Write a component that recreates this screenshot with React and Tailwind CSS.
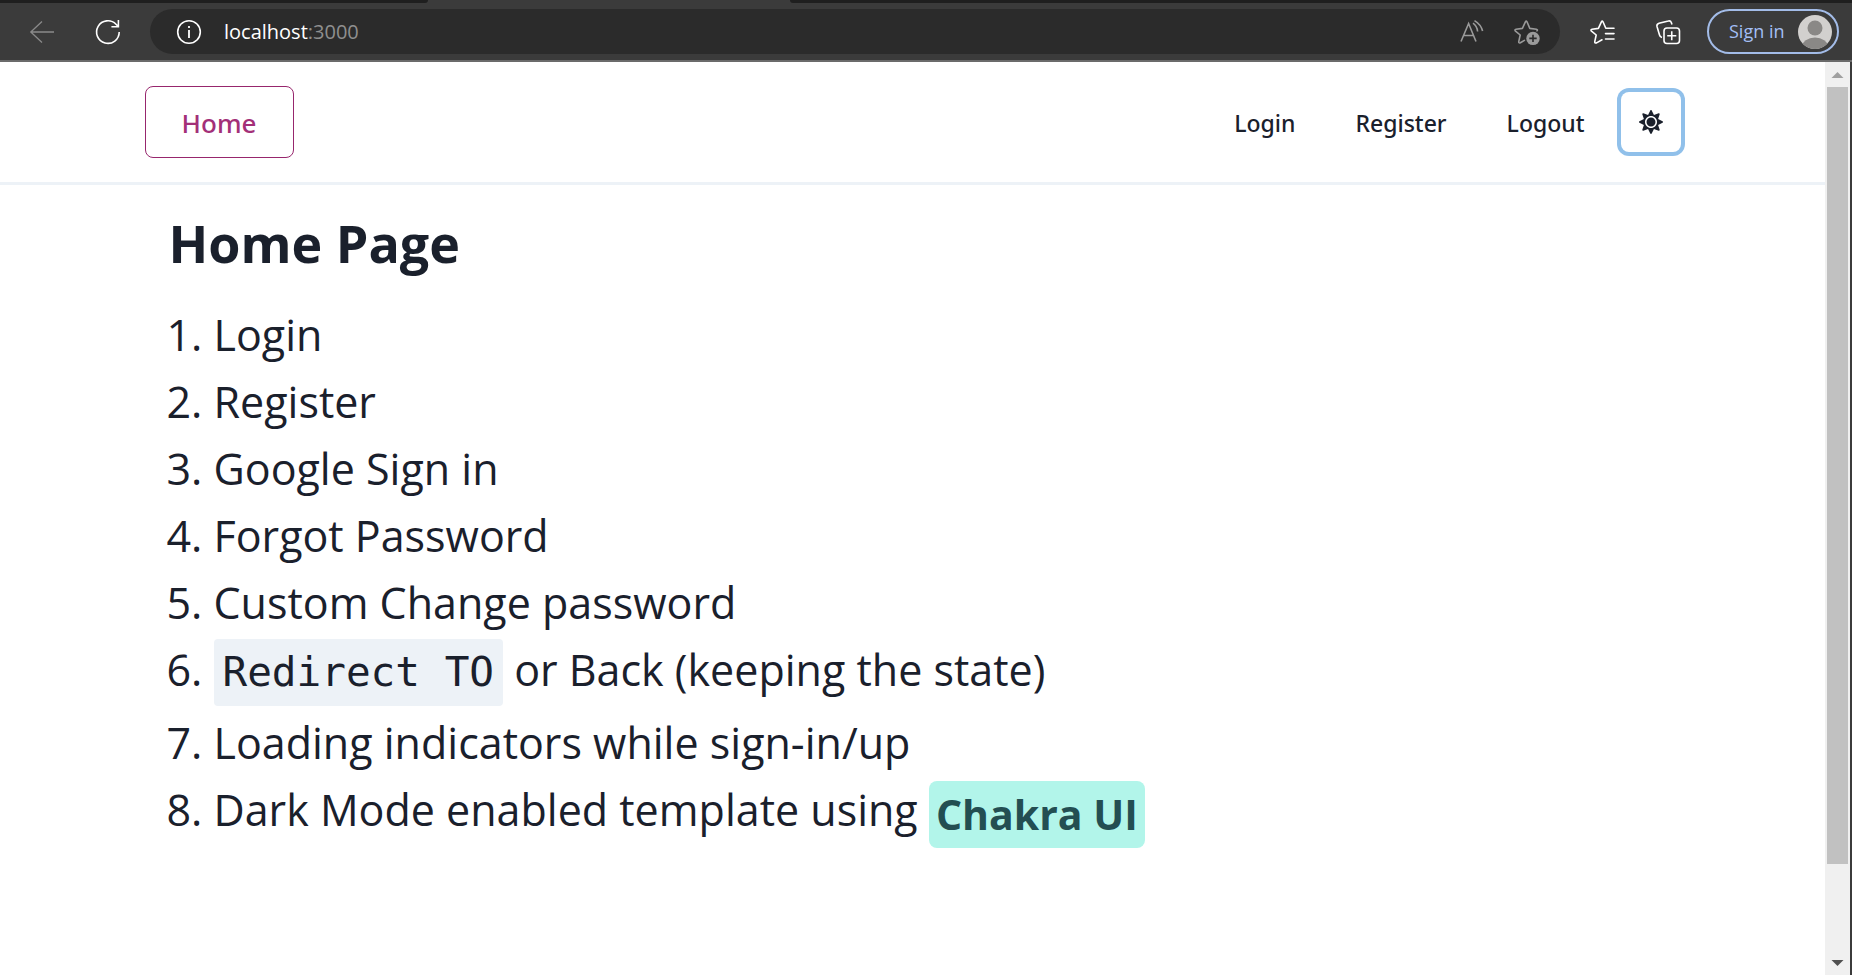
import React from "react";
import { FaSun } from "react-icons/fa";

const features = [
  "Login",
  "Register",
  "Google Sign in",
  "Forgot Password",
  "Custom Change password",
];

function ToolButton({ label, className = "", children }) {
  return (
    <button type="button" aria-label={label} className={"flex size-6 shrink-0 items-center justify-center " + className}>
      {children}
    </button>
  );
}

function Icon({ children, className = "" }) {
  return (
    <svg viewBox="0 0 24 24" fill="none" stroke="currentColor" strokeWidth="1.6" className={"size-6 shrink-0 overflow-visible " + className}>
      {children}
    </svg>
  );
}

function TabStrip() {
  return (
    <div className="flex h-[3px] bg-[#3b3b3b]">
      <div className="w-[428px] rounded-br-[3px] bg-[#1f1f1f]" />
      <div className="w-[362px]" />
      <div className="flex-1 rounded-bl-[3px] bg-[#1f1f1f]" />
    </div>
  );
}

function Toolbar() {
  return (
    <div className="flex h-[59px] items-center border-b-2 border-[#6b6b6b] bg-[#3b3b3b] pr-[13px] pl-[30px] text-white">
      <ToolButton label="Back" className="mr-[42px] text-[#8a8a8a]">
        <Icon>
          <path d="M24 12H.8M12 1.5.8 12 12 22.5" strokeWidth="1.3" />
        </Icon>
      </ToolButton>
      <ToolButton label="Refresh" className="mr-[30px]">
        <Icon>
          <path d="M23.2 12A11.3 11.3 0 1 1 20 4.2L22.4 6.6M22.4 0V6.8H15.4" />
        </Icon>
      </ToolButton>
      <div className="flex h-[45px] min-w-0 flex-1 items-center rounded-full bg-[#2b2b2b] pr-[22px] pl-[27px]">
        <ToolButton label="View site information" className="mr-[23px]">
          <Icon>
            <circle cx="12" cy="12" r="11.3" />
            <path d="M12 10V18M12 6V8" strokeWidth="1.8" />
          </Icon>
        </ToolButton>
        <div role="textbox" aria-label="Address" className="flex-1 text-[20px] leading-6 text-[#8f8f8f]">
          <span className="text-white">localhost</span>:3000
        </div>
        <ToolButton label="Read aloud" className="mr-[30px] text-[#9a9a9a]">
          <Icon>
            <path d="M1 21.5 8.6 3.5 16 21.5M3.7 15.5H13.5M13 3.2Q17 6 17.6 11.5M14.5 .6Q21 4.5 22.6 11" />
          </Icon>
        </ToolButton>
        <ToolButton label="Add this page to favorites" className="text-[#9a9a9a]">
          <Icon>
            <path d="M10.4 20.4 6.4 22.8Q4.4 23.4 4.8 21.4L6.2 15 1.2 10.8Q.4 9.6 2 9.2L8.4 8.4 11.4 1.8Q12.2.4 13 1.8L15.8 8.4 22.4 9.2Q24 9.6 23 10.8" strokeLinejoin="round" strokeLinecap="round" />
            <circle cx="19" cy="18.4" r="6.7" fill="currentColor" stroke="none" />
            <path d="M19 14.7V22.1M15.3 18.4H22.7" stroke="#2b2b2b" />
          </Icon>
        </ToolButton>
      </div>
      <ToolButton label="Favorites" className="mr-[42px] ml-[30px]">
        <Icon>
          <path d="M12 19.8 6.6 22.9Q4.4 23.4 4.8 21.4L6.2 15 1.2 10.8Q.4 9.6 2 9.2L8.4 8.4 11.4 1.8Q12.2.4 13 1.8L15.8 8.2H24M15.5 13.6H24M15.5 19H24" strokeLinejoin="round" strokeLinecap="round" />
        </Icon>
      </ToolButton>
      <ToolButton label="Collections" className="mr-[27px]">
        <Icon>
          <path d="M16 4.5 15.3 2.5Q14.6.4 12.3 1L3 3.2Q.4 4 1 6.5L3.5 15Q4 17 6 17.5" />
          <rect x="8" y="8" width="15.5" height="15.5" rx="3" />
          <path d="M15.75 11.2V20.3M11.2 15.75H20.3" />
        </Icon>
      </ToolButton>
      <button type="button" className="flex h-[45px] w-[132px] items-center justify-between rounded-full border-2 border-[#a3bce8] pr-[5px] pl-5 text-[18px] text-[#a3bff5]">
        Sign in
        <svg viewBox="0 0 34 34" className="size-[34px]">
          <defs>
            <clipPath id="avatar">
              <circle cx="17" cy="17" r="17" />
            </clipPath>
          </defs>
          <g clipPath="url(#avatar)">
            <rect width="34" height="34" fill="#d2d0ce" />
            <circle cx="17" cy="13" r="7.5" fill="#8a8886" />
            <ellipse cx="17" cy="32" rx="13" ry="9.5" fill="#8a8886" />
          </g>
        </svg>
      </button>
    </div>
  );
}

function NavLink({ href, children }) {
  return (
    <a href={href} className="px-[30px] pt-0.5 font-['Noto_Sans',sans-serif] text-[23px] font-medium">
      {children}
    </a>
  );
}

function Scrollbar() {
  return (
    <div aria-hidden="true" className="flex w-[27px] shrink-0 flex-col border-r-2 border-[#3b3b3b] bg-[#f0f0f0]">
      <svg viewBox="0 0 25 25" className="size-[25px]">
        <path d="M6.5 16 12.5 10 18.5 16Z" fill="#a0a0a0" />
      </svg>
      <div className="flex-1 pr-0.5 pl-0.5">
        <div className="h-[90%] bg-[#c1c1c1]" />
      </div>
      <svg viewBox="0 0 25 25" className="size-[25px]">
        <path d="M6.5 10 12.5 16 18.5 10Z" fill="#505050" />
      </svg>
    </div>
  );
}

export default function App() {
  return (
    <div className="flex min-h-screen flex-col bg-white font-['Open_Sans','Noto_Sans',sans-serif] text-[#1a202c]">
      <TabStrip />
      <Toolbar />
      <div className="flex flex-1 items-stretch">
        <div className="min-w-0 flex-1">
          <header className="border-b-[3px] border-[#edf2f7]">
            <nav className="mx-auto flex h-[120px] max-w-[1536px] items-center">
              <a href="#home" className="flex h-[72px] w-[149px] items-center justify-center rounded-lg border border-[#97266d] pt-0.5 font-['Noto_Sans',sans-serif] text-[26px] font-medium text-[#a33078]">
                Home
              </a>
              <div className="ml-auto flex items-center">
                <NavLink href="#login">Login</NavLink>
                <NavLink href="#register">Register</NavLink>
                <NavLink href="#logout">Logout</NavLink>
                <button type="button" aria-label="Toggle color mode" className="ml-[6px] flex size-[60px] items-center justify-center rounded-lg ring-4 ring-[#90c0ea]">
                  <FaSun className="size-6" />
                </button>
              </div>
            </nav>
          </header>
          <main className="mx-auto max-w-[1536px] px-6 pt-6">
            <h1 className="text-[52px] leading-[68px] font-bold">Home Page</h1>
            <ol className="mt-6 ml-[45px] list-decimal text-[43px] leading-[67px]">
              {features.map((feature) => (
                <li key={feature}>{feature}</li>
              ))}
              <li className="mb-[3px]">
                <code className="inline-block rounded-sm bg-[#edf2f7] px-[9px] font-['DejaVu_Sans_Mono',monospace] text-[41px]">Redirect TO</code>{" "}
                or Back (keeping the state)
              </li>
              <li>Loading indicators while sign-in/up</li>
              <li>
                Dark Mode enabled template using{" "}
                <span className="inline-block rounded-lg bg-[#b2f5ea] px-[7px] align-middle text-[41px] font-bold text-[#234e52]">Chakra UI</span>
              </li>
            </ol>
          </main>
        </div>
        <Scrollbar />
      </div>
    </div>
  );
}
